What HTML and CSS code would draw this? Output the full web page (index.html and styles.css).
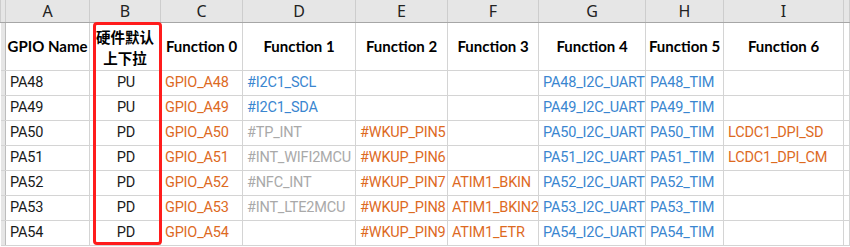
FILE: index.html
```html
<!DOCTYPE html>
<html lang="zh-CN">
<head>
  <meta charset="UTF-8" />
  <title>GPIO 功能表</title>
  <link rel="stylesheet" href="styles.css">
</head>
<body>
  <div class="sheet">
    <table class="grid">
      <colgroup>
        <col class="c-row">
        <col style="width:84px">
        <col style="width:71px">
        <col style="width:82px">
        <col style="width:113px">
        <col style="width:92px">
        <col style="width:91px">
        <col style="width:107px">
        <col style="width:78px">
        <col style="width:120px">
        <col>
      </colgroup>
      <tr class="letters">
        <th></th><th>A</th><th>B</th><th>C</th><th>D</th><th>E</th><th>F</th><th>G</th><th>H</th><th>I</th><th></th>
      </tr>
      <tr class="head">
        <td class="rh"></td>
        <td>GPIO Name</td>
        <td class="cn">硬件默认<br>上下拉</td>
        <td>Function 0</td>
        <td>Function 1</td>
        <td>Function 2</td>
        <td>Function 3</td>
        <td>Function 4</td>
        <td>Function 5</td>
        <td>Function 6</td>
        <td></td>
      </tr>
      <tr class="row">
        <td class="rh"></td><td>PA48</td><td class="mid">PU</td><td class="org">GPIO_A48</td><td class="blu">#I2C1_SCL</td><td></td><td></td><td class="blu">PA48_I2C_UART</td><td class="blu">PA48_TIM</td><td></td><td></td>
      </tr>
      <tr class="row">
        <td class="rh"></td><td>PA49</td><td class="mid">PU</td><td class="org">GPIO_A49</td><td class="blu">#I2C1_SDA</td><td></td><td></td><td class="blu">PA49_I2C_UART</td><td class="blu">PA49_TIM</td><td></td><td></td>
      </tr>
      <tr class="row">
        <td class="rh"></td><td>PA50</td><td class="mid">PD</td><td class="org">GPIO_A50</td><td class="gry">#TP_INT</td><td class="org">#WKUP_PIN5</td><td></td><td class="blu">PA50_I2C_UART</td><td class="blu">PA50_TIM</td><td class="org">LCDC1_DPI_SD</td><td></td>
      </tr>
      <tr class="row">
        <td class="rh"></td><td>PA51</td><td class="mid">PD</td><td class="org">GPIO_A51</td><td class="gry">#INT_WIFI2MCU</td><td class="org">#WKUP_PIN6</td><td></td><td class="blu">PA51_I2C_UART</td><td class="blu">PA51_TIM</td><td class="org">LCDC1_DPI_CM</td><td></td>
      </tr>
      <tr class="row">
        <td class="rh"></td><td>PA52</td><td class="mid">PD</td><td class="org">GPIO_A52</td><td class="gry">#NFC_INT</td><td class="org">#WKUP_PIN7</td><td class="org">ATIM1_BKIN</td><td class="blu">PA52_I2C_UART</td><td class="blu">PA52_TIM</td><td></td><td></td>
      </tr>
      <tr class="row">
        <td class="rh"></td><td>PA53</td><td class="mid">PD</td><td class="org">GPIO_A53</td><td class="gry">#INT_LTE2MCU</td><td class="org">#WKUP_PIN8</td><td class="org">ATIM1_BKIN2</td><td class="blu">PA53_I2C_UART</td><td class="blu">PA53_TIM</td><td></td><td></td>
      </tr>
      <tr class="row">
        <td class="rh"></td><td>PA54</td><td class="mid">PD</td><td class="org">GPIO_A54</td><td></td><td class="org">#WKUP_PIN9</td><td class="org">ATIM1_ETR</td><td class="blu">PA54_I2C_UART</td><td class="blu">PA54_TIM</td><td></td><td></td>
      </tr>
    </table>
    <!-- 标注B列的红框 -->
    <div class="mark"></div>
  </div>
</body>
</html>
```

FILE: styles.css
```css
body {
  margin: 0;
  background: #fff;
  font-family: Lato, "Noto Sans CJK SC", sans-serif;
  overflow: hidden;
}
.sheet {
  position: relative;
  width: 850px;
  height: 247px;
}
.grid {
  border-collapse: collapse;
  table-layout: fixed;
  width: 850px;
}
.c-row {
  width: 5px;
}
.grid th,
.grid td {
  border: 1px solid #d4d4d4;
  padding: 0 3px;
  white-space: nowrap;
  overflow: hidden;
}
/* 列标 A B C ... */
.letters th {
  height: 22px;
  background: #e6e6e6;
  border-color: #cdcdcd;
  border-top: none;
  border-bottom: 1px solid #a6a6a6;
  font-family: "Noto Sans", sans-serif;
  font-weight: normal;
  font-size: 16px;
  color: #222;
  padding: 0;
  line-height: 22px;
}
.rh {
  background: #e6e6e6;
  border-left: none !important;
  border-right-color: #bdbdbd !important;
  padding: 0 !important;
}
.head td {
  height: 47px;
  text-align: center;
  font-weight: bold;
  font-size: 15px;
  color: #000;
  line-height: 21px;
  padding: 0 1px;
}
.head td.cn {
  font-family: "Noto Sans CJK SC", sans-serif;
  font-size: 14.5px;
}
/* 数据行：窄一些的字体，保证长信号名放得下 */
.row td {
  height: 24px;
  line-height: 24px;
  font-family: Roboto, "Noto Sans CJK SC", sans-serif;
  font-size: 14.5px;
  letter-spacing: -0.2px;
  color: #1a1a1a;
  padding: 0 2px 0 4px;
}
.row td.mid { text-align: center; }
.row td.org { color: #dd6a1f; }
.row td.blu { color: #3a86d0; }
.row td.gry { color: #a9a9a9; }
.mark {
  position: absolute;
  left: 93px;
  top: 22px;
  width: 63px;
  height: 217px;
  border: 3px solid #ff1c1c;
  border-radius: 4px;
}
```
